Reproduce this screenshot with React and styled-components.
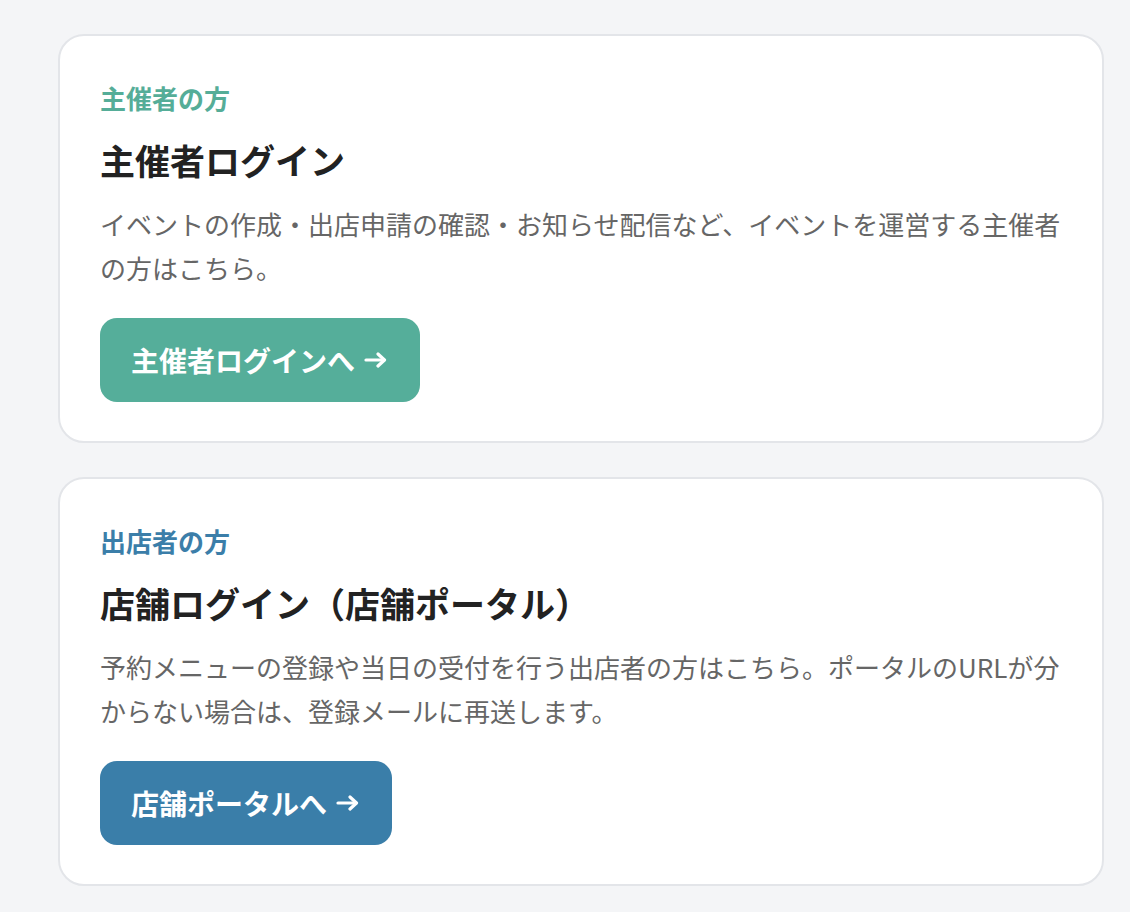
import React from "react";
import styled, { createGlobalStyle } from "styled-components";

const GlobalStyle = createGlobalStyle`
  html, body {
    margin: 0;
    padding: 0;
    background: #f4f5f7;
  }
  body {
    font-family: "Noto Sans CJK JP", "Noto Sans", sans-serif;
  }
`;

const Page = styled.div`
  display: flex;
  flex-direction: column;
  gap: 34px;
  width: 1046px;
  padding: 34px 0 40px 58px;
`;

const Card = styled.section`
  background: #fff;
  border: 2px solid #e3e5e9;
  border-radius: 26px;
  padding: 44px 36px 39px 40px;
  display: flex;
  flex-direction: column;
  align-items: flex-start;
`;

const Label = styled.div`
  font-size: 26px;
  line-height: 36px;
  font-weight: 700;
  color: ${(p) => p.color};
`;

const Title = styled.h2`
  margin: 20px 0 0;
  font-size: 35px;
  line-height: 48px;
  font-weight: 700;
  color: #222;
`;

const Body = styled.p`
  margin: 18px 0 0;
  font-size: 26px;
  line-height: 44px;
  color: #666;
`;

const Button = styled.a`
  margin-top: 28px;
  display: inline-flex;
  align-items: center;
  gap: 9px;
  height: 84px;
  padding: 0 33px 0 31px;
  box-sizing: border-box;
  border-radius: 17px;
  background: ${(p) => p.bg};
  color: #fff;
  font-size: 28px;
  font-weight: 700;
  text-decoration: none;
`;

const Arrow = () => (
  <svg width="23" height="16" viewBox="0 0 23 16" fill="none" stroke="currentColor" strokeWidth="3.2" strokeLinecap="round" strokeLinejoin="round">
    <path d="M2 8h18" />
    <path d="M14 2l6.5 6-6.5 6" />
  </svg>
);

const cards = [
  {
    label: "主催者の方",
    color: "#55ad98",
    title: "主催者ログイン",
    body: "イベントの作成・出店申請の確認・お知らせ配信など、イベントを運営する主催者の方はこちら。",
    button: "主催者ログインへ",
    bg: "#55ae9a",
  },
  {
    label: "出店者の方",
    color: "#3b7ea9",
    title: "店舗ログイン（店舗ポータル）",
    body: "予約メニューの登録や当日の受付を行う出店者の方はこちら。ポータルのURLが分からない場合は、登録メールに再送します。",
    button: "店舗ポータルへ",
    bg: "#3a7ea9",
  },
];

export default function App() {
  return (
    <>
      <GlobalStyle />
      <Page>
        {cards.map((c) => (
          <Card key={c.title}>
            <Label color={c.color}>{c.label}</Label>
            <Title>{c.title}</Title>
            <Body>{c.body}</Body>
            <Button bg={c.bg} href="#">
              {c.button}
              <Arrow />
            </Button>
          </Card>
        ))}
      </Page>
    </>
  );
}
